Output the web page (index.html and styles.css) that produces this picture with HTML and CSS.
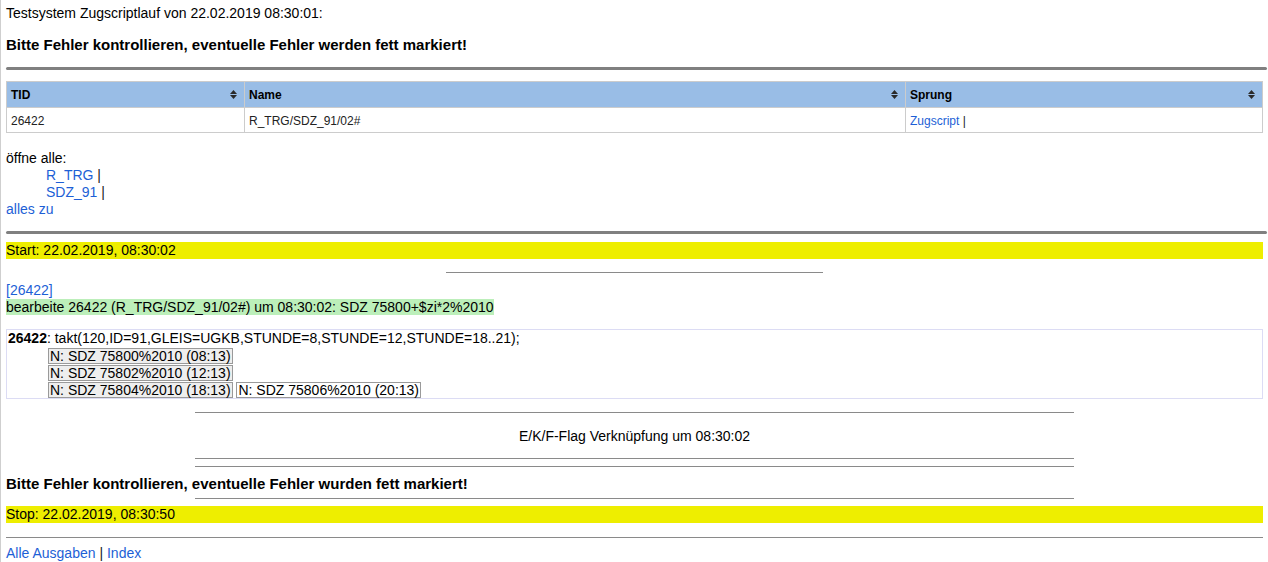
FILE: index.html
```html
<!DOCTYPE html>
<html lang="de">
<head>
<meta charset="utf-8">
<title>Testsystem Zugscriptlauf</title>
<link rel="stylesheet" href="styles.css">
</head>
<body>
<div class="page">
  <p class="line title">Testsystem Zugscriptlauf von 22.02.2019 08:30:01:</p>
  <p class="line warn warn-top">Bitte Fehler kontrollieren, eventuelle Fehler werden fett markiert!</p>
  <hr class="thick thick-top">

  <table class="grid">
    <colgroup>
      <col class="c-tid">
      <col class="c-name">
      <col class="c-sprung">
    </colgroup>
    <thead>
      <tr>
        <th><div class="th-in"><span>TID</span><svg class="sort" viewBox="0 0 7 9" width="7" height="9"><path d="M0 4 L3.5 0 L7 4 Z M0 5 L3.5 9 L7 5 Z"/></svg></div></th>
        <th><div class="th-in"><span>Name</span><svg class="sort" viewBox="0 0 7 9" width="7" height="9"><path d="M0 4 L3.5 0 L7 4 Z M0 5 L3.5 9 L7 5 Z"/></svg></div></th>
        <th><div class="th-in"><span>Sprung</span><svg class="sort" viewBox="0 0 7 9" width="7" height="9"><path d="M0 4 L3.5 0 L7 4 Z M0 5 L3.5 9 L7 5 Z"/></svg></div></th>
      </tr>
    </thead>
    <tbody>
      <tr>
        <td>26422</td>
        <td>R_TRG/SDZ_91/02#</td>
        <td><a href="#">Zugscript</a> <span class="sep">|</span></td>
      </tr>
    </tbody>
  </table>

  <div class="open">
    <div class="line">öffne alle:</div>
    <div class="indent">
      <div class="line"><a href="#">R_TRG</a> <span class="sep">|</span></div>
      <div class="line"><a href="#">SDZ_91</a> <span class="sep">|</span></div>
    </div>
    <div class="line"><a href="#">alles zu</a></div>
  </div>

  <hr class="thick thick-mid">
  <div class="line bar yellow start">Start: 22.02.2019, 08:30:02</div>
  <hr class="rule short">

  <div class="line tid-link"><a href="#">[26422]</a></div>
  <div class="line"><span class="green">bearbeite 26422 (R_TRG/SDZ_91/02#) um 08:30:02: SDZ 75800+$zi*2%2010</span></div>

  <div class="box">
    <div class="line"><b>26422</b>: takt(120,ID=91,GLEIS=UGKB,STUNDE=8,STUNDE=12,STUNDE=18..21);</div>
    <div class="indent">
      <div class="line"><span class="train">N: SDZ 75800%2010 (08:13)</span></div>
      <div class="line"><span class="train">N: SDZ 75802%2010 (12:13)</span></div>
      <div class="line"><span class="train">N: SDZ 75804%2010 (18:13)</span> <span class="train plain">N: SDZ 75806%2010 (20:13)</span></div>
    </div>
  </div>

  <hr class="rule wide r1">
  <div class="line center flag">E/K/F-Flag Verknüpfung um 08:30:02</div>
  <hr class="rule wide r2">
  <hr class="rule wide r3">
  <p class="line warn warn-bottom">Bitte Fehler kontrollieren, eventuelle Fehler wurden fett markiert!</p>
  <hr class="rule wide r4">
  <div class="line bar yellow stop">Stop: 22.02.2019, 08:30:50</div>
  <hr class="rule full">
  <div class="line footer"><a href="#">Alle Ausgaben</a> <span class="sep">|</span> <a href="#">Index</a></div>
</div>
</body>
</html>
```

FILE: styles.css
```css
html, body {
  margin: 0;
  padding: 0;
}

body {
  font-family: "Liberation Sans", Arial, sans-serif;
  font-size: 14px;
  color: #000;
  background: #fff;
  border-left: 1px solid #cfcfcf;
  min-height: 100vh;
  box-sizing: border-box;
}

.page {
  padding: 5px 5px 0 5px;
}

.line {
  line-height: 17px;
  margin: 0;
}

a {
  color: #1d5fd6;
  text-decoration: none;
}

.sep {
  color: #222;
}

.warn {
  font-weight: bold;
  font-size: 15px;
}

.warn-top {
  margin-top: 14px;
}

hr {
  margin: 0;
  border: 0;
}

.thick {
  height: 3px;
  background: #808080;
  border-radius: 2px;
  margin-right: -4px;
}

.thick-top {
  margin-top: 14px;
}

.thick-mid {
  margin-top: 13px;
}

.rule {
  height: 1px;
  background: #8a8a8a;
}

.short {
  width: 30%;
  margin: 13px auto 0;
}

.wide {
  width: 70%;
  margin-left: auto;
  margin-right: auto;
}

.full {
  margin-top: 14px;
}

/* table */
.grid {
  width: 100%;
  border-collapse: collapse;
  margin-top: 11px;
  font-size: 12px;
  border: 1px solid #cccccc;
}

.c-tid { width: 238px; }
.c-name { width: 661px; }

.grid th,
.grid td {
  border: 1px solid #cccccc;
  padding: 0 4px;
  text-align: left;
}

.grid th {
  background: #99bde6;
  height: 25px;
  font-weight: bold;
  color: #000;
  padding-right: 7px;
}

.grid td {
  height: 23px;
  color: #222;
  padding-top: 1px;
}

.th-in {
  display: flex;
  justify-content: space-between;
  align-items: center;
}

.sort {
  fill: #2a2a2a;
  display: block;
}

/* open block */
.open {
  margin-top: 17px;
}

.indent {
  padding-left: 40px;
}

.bar {
  margin-top: 8px;
}

.yellow {
  background: #eeee00;
}

.tid-link {
  margin-top: 9px;
}

.green {
  background: #bcefba;
}

.box {
  margin-top: 13px;
  border: 1px solid #dcdcf4;
  padding: 0 1px;
}

.box .indent {
  padding-left: 40px;
}

.train {
  display: inline-block;
  line-height: 14px;
  border: 1px solid #9a9a9a;
  background: #eeeeee;
  padding: 0 1px;
  vertical-align: bottom;
}

.train.plain {
  background: #ffffff;
}

.r1 {
  margin-top: 13px;
}

.flag {
  margin-top: 15px;
}

.center {
  text-align: center;
}

.r2 {
  margin-top: 13px;
}

.r3 {
  margin-top: 7px;
}

.warn-bottom {
  margin-top: 8px;
}

.r4 {
  margin-top: 6px;
}

.stop {
  margin-top: 7px;
}

.footer {
  margin-top: 7px;
}
```
